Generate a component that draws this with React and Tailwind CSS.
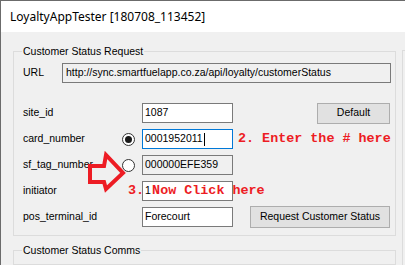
import React from "react";

const sans = { fontFamily: '"Liberation Sans", Arial, sans-serif' };

function TextBox({ value, readOnly, focused, caret, className = "" }) {
  return (
    <div
      className={`flex items-center h-[20px] border pl-[2px] text-[10.5px] text-black overflow-hidden whitespace-nowrap ${
        focused ? "border-[#0078d7] bg-white" : readOnly ? "border-[#7a7a7a] bg-[#f0f0f0]" : "border-[#7a7a7a] bg-white"
      } ${className}`}
      style={sans}
    >
      <span>{value}</span>
      {caret && <span className="inline-block w-px h-[13px] bg-black ml-[1px]" />}
    </div>
  );
}

function Radio({ checked }) {
  return (
    <div className="w-[13px] h-[13px] rounded-full border border-[#333333] bg-white flex items-center justify-center">
      {checked && <div className="w-[7px] h-[7px] rounded-full bg-[#1a1a1a]" />}
    </div>
  );
}

function Button({ children, className = "" }) {
  return (
    <div
      className={`flex items-center justify-center border border-[#adadad] bg-[#e1e1e1] text-[10.5px] text-black ${className}`}
      style={sans}
    >
      {children}
    </div>
  );
}

function Row({ label, radio, children }) {
  return (
    <div className="flex items-center h-[20px] relative">
      <div className="w-[99px] text-[10.5px] text-black" style={sans}>
        {label}
      </div>
      <div className="w-[13px] flex items-center justify-center">
        {radio !== undefined && <Radio checked={radio} />}
      </div>
      <div className="w-[7px]" />
      {children}
    </div>
  );
}

const red = {
  fontFamily: '"Liberation Mono", "DejaVu Sans Mono", monospace',
  fontWeight: 700,
};

export default function App() {
  return (
    <div className="w-[405px] h-[265px] overflow-hidden bg-[#f0f0f0] border-l border-t border-[#6b6b6b]">
      <div className="h-[31px] bg-white flex items-center pl-[9px]">
        <span className="text-[12px] text-black" style={{ fontFamily: '"Noto Sans", "Open Sans", sans-serif' }}>
          LoyaltyAppTester [180708_113452]
        </span>
      </div>
      <div className="flex pl-[12px] pt-[19px] h-[233px]">
        <div className="w-[383px] flex flex-col">
          <div className="relative border border-[#dcdcdc] pl-[9px] pr-[4px] pt-[11px] pb-[8px]">
            <span
              className="absolute left-[8px] top-[-8px] px-[1px] bg-[#f0f0f0] text-[10.5px] text-black leading-[14px]"
              style={sans}
            >
              Customer Status Request
            </span>
            <div className="flex items-center h-[20px]">
              <div className="w-[39px] text-[10.5px] text-black" style={sans}>
                URL
              </div>
              <TextBox readOnly value="http://sync.smartfuelapp.co.za/api/loyalty/customerStatus" className="flex-1 pl-[3px]" />
            </div>
            <div className="relative mt-[20px] flex flex-col gap-[6px]">
              <Row label="site_id">
                <TextBox value="1087" className="w-[91px]" />
                <Button className="ml-auto mr-[1px] w-[73px] h-[21px]">Default</Button>
              </Row>
              <Row label="card_number" radio={true}>
                <TextBox value="0001952011" focused caret className="w-[91px]" />
                <span className="ml-[5px] text-[13.4px] leading-none text-[#ed1c24]" style={red}>
                  2. Enter the # here
                </span>
              </Row>
              <Row label="sf_tag_number" radio={false}>
                <TextBox readOnly value="000000EFE359" className="w-[91px]" />
              </Row>
              <Row label="initiator">
                <TextBox value="1" className="w-[91px]" />
                <span
                  className="absolute left-[105px] top-[3px] text-[13.4px] leading-none text-[#ed1c24] whitespace-pre"
                  style={red}
                >
                  3. Now Click here
                </span>
              </Row>
              <Row label="pos_terminal_id">
                <TextBox value="Forecourt" className="w-[91px]" />
                <Button className="ml-auto mr-[1px] w-[140px] h-[22px]">Request Customer Status</Button>
              </Row>
              <svg
                className="absolute left-[64px] top-[48px]"
                width="40"
                height="42"
                viewBox="0 0 40 42"
              >
                <polygon
                  points="3,15 17,15 19,4 36,22 19,38 17,31 3,31"
                  fill="none"
                  stroke="#ed1c24"
                  strokeWidth="4"
                  strokeLinejoin="miter"
                />
              </svg>
            </div>
          </div>
          <div className="relative mt-[14px] border border-[#dcdcdc] h-[40px]">
            <span
              className="absolute left-[8px] top-[-8px] px-[1px] bg-[#f0f0f0] text-[10.5px] text-black leading-[14px]"
              style={sans}
            >
              Customer Status Comms
            </span>
          </div>
        </div>
        <div className="ml-[6px] flex-1 border-l border-t border-[#dcdcdc] mt-[-1px]" />
      </div>
    </div>
  );
}
